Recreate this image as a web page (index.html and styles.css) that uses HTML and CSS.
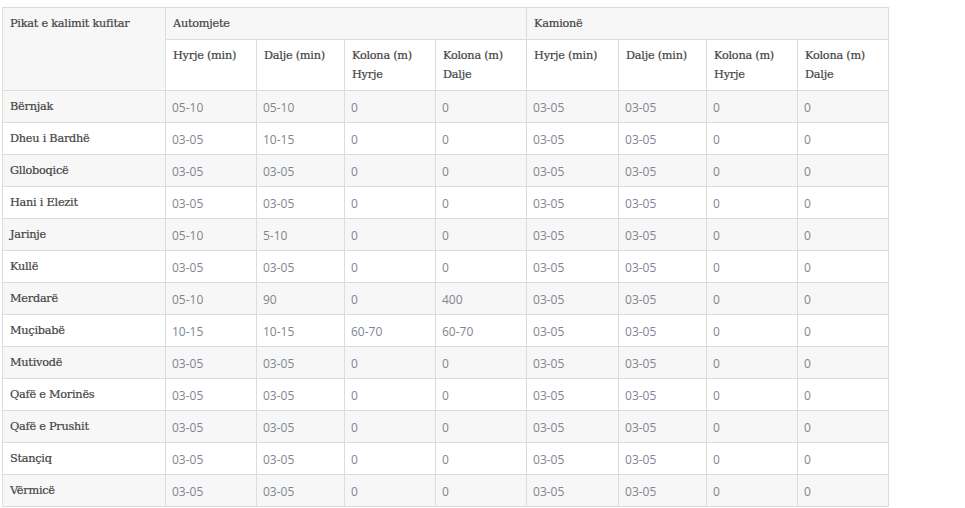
FILE: index.html
```html
<!DOCTYPE html>
<html>
<head>
<meta charset="utf-8">
<link rel="stylesheet" href="styles.css">
</head>
<body>
<table class="tbl">
  <colgroup>
    <col class="c0"><col class="c1"><col class="c2"><col class="c3"><col class="c4"><col class="c5"><col class="c6"><col class="c7"><col class="c8">
  </colgroup>
  <thead>
    <tr class="h1">
      <th rowspan="2">Pikat e kalimit kufitar</th>
      <th colspan="4">Automjete</th>
      <th colspan="4">Kamionë</th>
    </tr>
    <tr class="h2">
      <th>Hyrje (min)</th><th>Dalje (min)</th><th>Kolona (m)<br>Hyrje</th><th>Kolona (m)<br>Dalje</th>
      <th>Hyrje (min)</th><th>Dalje (min)</th><th>Kolona (m)<br>Hyrje</th><th>Kolona (m)<br>Dalje</th>
    </tr>
  </thead>
  <tbody>
    <tr><th>Bërnjak</th><td>05-10</td><td>05-10</td><td>0</td><td>0</td><td>03-05</td><td>03-05</td><td>0</td><td>0</td></tr>
    <tr><th>Dheu i Bardhë</th><td>03-05</td><td>10-15</td><td>0</td><td>0</td><td>03-05</td><td>03-05</td><td>0</td><td>0</td></tr>
    <tr><th>Glloboqicë</th><td>03-05</td><td>03-05</td><td>0</td><td>0</td><td>03-05</td><td>03-05</td><td>0</td><td>0</td></tr>
    <tr><th>Hani i Elezit</th><td>03-05</td><td>03-05</td><td>0</td><td>0</td><td>03-05</td><td>03-05</td><td>0</td><td>0</td></tr>
    <tr><th>Jarinje</th><td>05-10</td><td>5-10</td><td>0</td><td>0</td><td>03-05</td><td>03-05</td><td>0</td><td>0</td></tr>
    <tr><th>Kullë</th><td>03-05</td><td>03-05</td><td>0</td><td>0</td><td>03-05</td><td>03-05</td><td>0</td><td>0</td></tr>
    <tr><th>Merdarë</th><td>05-10</td><td>90</td><td>0</td><td>400</td><td>03-05</td><td>03-05</td><td>0</td><td>0</td></tr>
    <tr><th>Muçibabë</th><td>10-15</td><td>10-15</td><td>60-70</td><td>60-70</td><td>03-05</td><td>03-05</td><td>0</td><td>0</td></tr>
    <tr><th>Mutivodë</th><td>03-05</td><td>03-05</td><td>0</td><td>0</td><td>03-05</td><td>03-05</td><td>0</td><td>0</td></tr>
    <tr><th>Qafë e Morinës</th><td>03-05</td><td>03-05</td><td>0</td><td>0</td><td>03-05</td><td>03-05</td><td>0</td><td>0</td></tr>
    <tr><th>Qafë e Prushit</th><td>03-05</td><td>03-05</td><td>0</td><td>0</td><td>03-05</td><td>03-05</td><td>0</td><td>0</td></tr>
    <tr><th>Stançiq</th><td>03-05</td><td>03-05</td><td>0</td><td>0</td><td>03-05</td><td>03-05</td><td>0</td><td>0</td></tr>
    <tr><th>Vërmicë</th><td>03-05</td><td>03-05</td><td>0</td><td>0</td><td>03-05</td><td>03-05</td><td>0</td><td>0</td></tr>
  </tbody>
</table>
</body>
</html>
```
FILE: styles.css
```css
html, body {
  margin: 0;
  padding: 0;
  background: #fff;
}
body {
  padding: 7px 0 0 2px;
}
.tbl {
  border-collapse: collapse;
  table-layout: fixed;
  width: 887px;
  border: 1px solid #dcdcdc;
}
.c0 { width: 163px; }
.c1 { width: 91px; }
.c2 { width: 88px; }
.c3 { width: 91px; }
.c4 { width: 91px; }
.c5 { width: 92px; }
.c6 { width: 88px; }
.c7 { width: 91px; }
.c8 { width: 91px; }
.tbl th, .tbl td {
  border: 1px solid #dcdcdc;
  padding: 6px 7px 6px 7px;
  text-align: left;
  vertical-align: top;
  line-height: 19px;
}
.tbl th {
  font-family: "DejaVu Serif", serif;
  font-weight: normal;
  font-size: 11.3px;
  color: #444;
  letter-spacing: -0.25px;
  -webkit-text-stroke: 0.2px #444;
}
.tbl td {
  font-family: "Open Sans", sans-serif;
  font-size: 12px;
  color: #80868f;
  padding: 7px 6px 5px 6px;
}
.h1 th { background: #f7f7f7; height: 19px; }
.h2 th { background: #fff; height: 37px; padding-top: 6px; }
tbody tr { height: 32px; }
tbody tr:nth-child(odd) { background: #f7f7f7; }
tbody tr:nth-child(even) { background: #fff; }
```
